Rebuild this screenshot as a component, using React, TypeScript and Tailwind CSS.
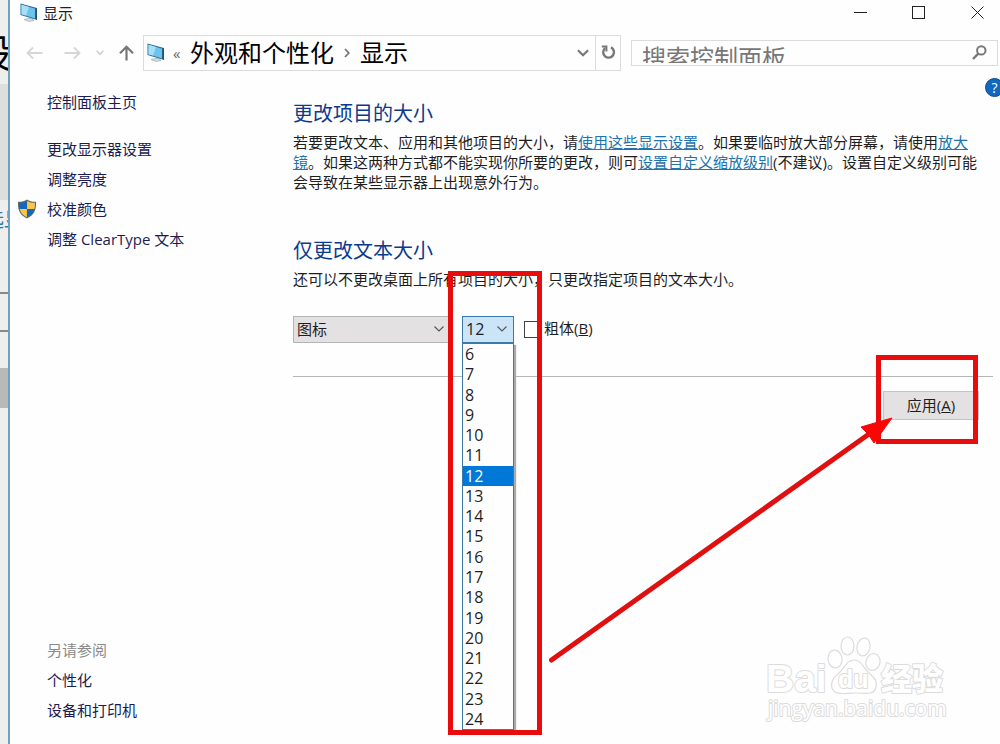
import React, { useState } from 'react';

const sizes = ['6', '7', '8', '9', '10', '11', '12', '13', '14', '15', '16', '17', '18', '19', '20', '21', '22', '23', '24'];

const tasks = [
  { label: '更改显示器设置' },
  { label: '调整亮度' },
  { label: '校准颜色', shield: true },
  { label: '调整 ClearType 文本' },
];

const MonitorIcon: React.FC = () => (
  <svg width="18" height="19" viewBox="0 0 18 19" className="shrink-0" aria-hidden="true">
    <path d="M4 16.5 L9 18.5 L14 17.5 L11 15 Z" fill="#d5dde2" stroke="#8fa3ae" strokeWidth="0.6" />
    <path d="M0.5 0.5 L17 5 V17 L0.5 12 Z" fill="#2f7196" />
    <path d="M1.5 1.8 L15.2 5.8 V15.4 L1.5 11.3 Z" fill="#6cc4ec" />
    <path d="M1.5 1.8 L9 4 L6 12.600 L1.5 11.3 Z" fill="#a5e0f8" />
    <path d="M15.2 5.8 L17 5 V17 L15.2 15.4 Z" fill="#26546e" />
  </svg>
);

const ShieldIcon: React.FC = () => (
  <svg width="20" height="20" viewBox="0 0 20 20" aria-hidden="true">
    <path d="M10 0.5 C7.5 2.3 4.5 2.9 1 2.8 C0.6 10.5 2.5 16 10 19.5 C17.5 16 19.4 10.5 19 2.8 C15.5 2.9 12.5 2.3 10 0.5 Z" fill="#5d6a6c" />
    <path d="M9.9 1.9 C7.8 3.2 5 3.9 2.1 3.8 C2 6 2.1 8.2 2.7 10 H9.9 Z" fill="#1467bd" />
    <path d="M10.1 1.9 C12.2 3.2 15 3.9 17.9 3.8 C18 6 17.9 8.2 17.3 10 H10.1 Z" fill="#fbc646" />
    <path d="M2.7 10 C3.7 13.8 6 16.5 9.9 18.3 V10 Z" fill="#fbc646" />
    <path d="M17.3 10 C16.3 13.8 14 16.5 10.1 18.3 V10 Z" fill="#1467bd" />
  </svg>
);

const Chevron: React.FC = () => (
  <svg width="10" height="6" viewBox="0 0 10 6" className="pointer-events-none absolute right-[7px] top-[10px]" aria-hidden="true">
    <path d="M0.5 0.5 L5 5 L9.5 0.5" fill="none" stroke="#555" strokeWidth="1.1" />
  </svg>
);

const BackgroundWindow: React.FC = () => (
  <div className="flex w-2 shrink-0 flex-col overflow-hidden bg-[#efeeee]" aria-hidden="true">
    <div className="flex h-[84px] items-center justify-end pt-5 text-[38px] leading-10 text-black">
      <span className="-mr-1">设</span>
    </div>
    <div className="h-[116px] bg-[#dfdede]" />
    <div className="flex h-10 items-center justify-center whitespace-nowrap text-xl text-[#2a7ab0]">选显</div>
    <div className="mt-[52px] h-[2px] bg-[#888]" />
    <div className="mt-9 h-[2px] bg-[#888]" />
    <div className="mt-9 h-10 bg-[#b9b9b9]" />
  </div>
);

const TitleBar: React.FC = () => (
  <header className="flex h-[25px] items-center pl-[10px] text-[15px]">
    <MonitorIcon />
    <h1 className="ml-[5px] flex-1 leading-5">显示</h1>
    <button aria-label="最小化" className="flex w-[58px] justify-center">
      <svg width="13" height="13" viewBox="0 0 13 13"><path d="M0 6.5 H13" stroke="#222" /></svg>
    </button>
    <button aria-label="最大化" className="flex w-[58px] justify-center">
      <svg width="13" height="13" viewBox="0 0 13 13"><rect x="0.5" y="0.5" width="12" height="12" fill="none" stroke="#222" /></svg>
    </button>
    <button aria-label="关闭" className="flex w-[53px] justify-center pl-2">
      <svg width="13" height="13" viewBox="0 0 13 13"><path d="M0.5 0.5 L12.5 12.5 M12.5 0.5 L0.5 12.5" stroke="#222" /></svg>
    </button>
  </header>
);

const NavBar: React.FC = () => (
  <div className="flex h-[55px] items-center pl-[5px] pr-[2px]">
    <button aria-label="后退" className="flex w-[38px] justify-center">
      <svg width="17" height="14" viewBox="0 0 17 14"><path d="M16.5 7 H1.5 M7 1.5 L1.5 7 L7 12.5" fill="none" stroke="#d6d6d6" strokeWidth="1.8" /></svg>
    </button>
    <button aria-label="前进" className="flex w-[38px] justify-center">
      <svg width="17" height="14" viewBox="0 0 17 14"><path d="M0.5 7 H15.5 M10 1.5 L15.5 7 L10 12.5" fill="none" stroke="#d6d6d6" strokeWidth="1.8" /></svg>
    </button>
    <button aria-label="最近浏览的位置" className="flex w-[18px] justify-center">
      <svg width="8" height="6" viewBox="0 0 8 6"><path d="M0.7 0.7 L4 4.3 L7.3 0.7" fill="none" stroke="#cfcfcf" strokeWidth="1.6" /></svg>
    </button>
    <button aria-label="上移" className="flex w-[34px] justify-center">
      <svg width="15" height="16" viewBox="0 0 15 16"><path d="M7.5 15.5 V2 M1 8.2 L7.5 1.7 L14 8.2" fill="none" stroke="#777" strokeWidth="2.2" /></svg>
    </button>
    <div className="flex h-9 min-w-0 flex-[477] items-center border border-[#dcdcdc] pl-[3px]">
      <MonitorIcon />
      <span className="ml-2 w-[17px] text-[15px] leading-5 text-[#666]">«</span>
      <a href="#appearance" className="whitespace-nowrap text-2xl text-black">外观和个性化</a>
      <svg width="6" height="10" viewBox="0 0 6 10" className="mx-[10px]" aria-hidden="true"><path d="M1 1 L4.8 5 L1 9" fill="none" stroke="#777" strokeWidth="1.8" /></svg>
      <a href="#display" className="flex-1 whitespace-nowrap text-2xl text-black">显示</a>
      <button aria-label="上一个位置" className="flex w-[25px] justify-center">
        <svg width="12" height="8" viewBox="0 0 12 8"><path d="M1 1.2 L6 6.2 L11 1.2" fill="none" stroke="#777" strokeWidth="2.2" /></svg>
      </button>
      <button aria-label="刷新" className="flex h-full w-[25px] items-center justify-center border-l border-[#dcdcdc]">
        <svg width="15" height="15" viewBox="0 0 15 15">
          <path d="M10 2.4 A5.4 5.4 0 1 1 4 3.2" fill="none" stroke="#777" strokeWidth="2.4" />
          <path d="M0.8 1.6 H5.4 V6.4" fill="none" stroke="#777" strokeWidth="2" />
        </svg>
      </button>
    </div>
    <div className="ml-[10px] flex h-[26px] min-w-0 flex-[368] border border-[#dcdcdc]">
      <div className="h-[22px] min-w-0 flex-1 overflow-hidden">
        <input type="text" aria-label="搜索控制面板" placeholder="搜索控制面板" className="h-[34px] w-full bg-transparent pl-[10px] text-2xl outline-none placeholder:text-[#777]" />
      </div>
      <button aria-label="搜索" className="flex w-9 items-center justify-center">
        <svg width="15" height="15" viewBox="0 0 15 15"><circle cx="9.3" cy="5.4" r="4.2" fill="none" stroke="#777" strokeWidth="2" /><path d="M6.3 8.6 L1 14" stroke="#777" strokeWidth="2.4" /></svg>
      </button>
    </div>
  </div>
);

const Sidebar: React.FC = () => (
  <nav className="flex w-[283px] shrink-0 flex-col pb-6 pt-3 text-[15px] leading-5 text-[#1c1c50]">
    <a href="#home" className="ml-[37px]">控制面板主页</a>
    <ul className="mt-[27px] flex flex-col gap-[10px]">
      {tasks.map((task) => (
        <li key={task.label} className="flex h-5 items-center">
          <span className="w-[37px] pl-[7px]">{task.shield && <ShieldIcon />}</span>
          <a href="#task">{task.label}</a>
        </li>
      ))}
    </ul>
    <div className="ml-[37px] mt-auto flex flex-col gap-[10px]">
      <p className="text-[#8a8a8a]">另请参阅</p>
      <a href="#personalize">个性化</a>
      <a href="#devices">设备和打印机</a>
    </div>
  </nav>
);

const Watermark: React.FC = () => (
  <svg width="184" height="90" viewBox="0 0 184 90" className="pointer-events-none absolute bottom-[18px] right-[52px]" aria-hidden="true">
    <g fill="#fff" stroke="#dcdcdc" strokeWidth="1.2">
      <ellipse cx="71" cy="23" rx="7" ry="9" transform="rotate(-8 71 23)" />
      <ellipse cx="83.500" cy="10" rx="6.500" ry="9" />
      <ellipse cx="99.500" cy="11" rx="6.500" ry="9" transform="rotate(12 99.500 11)" />
      <ellipse cx="109" cy="26" rx="7" ry="8.500" transform="rotate(14 109 26)" />
      <path d="M90 24 C97 24 99 31 104 36 C109 41 114 44 112 51 C110 60 101 57 91 57 C81 57 71 60 68 52 C66 44 71 41 76 36 C81 31 83 24 90 24 Z" />
    </g>
    <g fill="#fff" stroke="#dcdcdc" strokeWidth="2" strokeLinejoin="round" style={{ paintOrder: 'stroke' }}>
      <text x="2" y="56" fontSize="39" fontWeight="700" fontFamily="Liberation Sans, sans-serif">Bai</text>
      <text x="74" y="52" fontSize="25" fontWeight="700" fontFamily="Liberation Sans, sans-serif">du</text>
      <text x="117" y="54" fontSize="31" fontWeight="900" fontFamily="Noto Sans CJK SC, sans-serif">经验</text>
      <text x="4" y="80" fontSize="21" fontFamily="Open Sans, sans-serif">jingyan.baidu.com</text>
    </g>
  </svg>
);

const App: React.FC = () => {
  const [size, setSize] = useState('12');

  return (
    <div className="relative flex min-h-screen overflow-hidden bg-[#fefefe] font-['Open_Sans','Noto_Sans_CJK_SC',sans-serif] text-[#1e1e1e]">
      <BackgroundWindow />
      <div className="flex min-w-0 flex-1 flex-col border-l-2 border-[#6fa3b8]">
        <TitleBar />
        <NavBar />
        <div className="flex flex-1">
          <Sidebar />
          <main className="min-w-0 flex-1 pr-[7px] pt-[19px] text-[15px] leading-5">
            <h2 className="text-xl leading-[30px] text-[#0c3a8c]">更改项目的大小</h2>
            <p className="mt-[3px] whitespace-nowrap">
              若要更改文本、应用和其他项目的大小，请<a href="#settings" className="text-[#2173ae] underline">使用这些显示设置</a>。如果要临时放大部分屏幕，请使用<a href="#magnifier" className="text-[#2173ae] underline">放大<br />镜</a>。如果这两种方式都不能实现你所要的更改，则可<a href="#scaling" className="text-[#2173ae] underline">设置自定义缩放级别</a>(不建议)。设置自定义级别可能<br />
              会导致在某些显示器上出现意外行为。
            </p>
            <h2 className="mt-11 text-xl leading-[30px] text-[#0c3a8c]">仅更改文本大小</h2>
            <p className="mt-[3px]">还可以不更改桌面上所有项目的大小，只更改指定项目的文本大小。</p>

            <div className="mt-[27px] flex h-[27px] items-center">
              <div className="relative h-full w-[158px]">
                <select aria-label="项目" className="h-full w-full appearance-none border border-[#b4b4b4] bg-[#e3e1e2] pb-[2px] pl-[3px] outline-none">
                  <option>图标</option>
                </select>
                <Chevron />
              </div>
              <div className="relative ml-[11px] h-full w-[52px] text-base">
                <select aria-label="字号" value={size} onChange={(e) => setSize(e.target.value)} className="h-full w-full appearance-none border border-[#3a7ca8] bg-[#cce4f7] pb-[2px] pl-[3px] outline-none">
                  {sizes.map((s) => <option key={s}>{s}</option>)}
                </select>
                <Chevron />
                <ul role="listbox" aria-label="字号列表" className="absolute left-0 top-full grid h-[387px] w-full auto-rows-fr border border-[#3a7ca8] bg-[#fefefe] shadow-[2px_2px_1px_#aaa]">
                  {sizes.map((s) => (
                    <li key={s} role="option" aria-selected={s === size} onClick={() => setSize(s)} className={`flex items-center pl-[2px] leading-5 ${s === size ? 'bg-[#0078d7] text-white' : ''}`}>
                      {s}
                    </li>
                  ))}
                </ul>
              </div>
              <label className="ml-[10px] flex items-center gap-[3px]">
                <input type="checkbox" className="h-[17px] w-[17px] appearance-none border border-[#444] bg-white checked:bg-[#0078d7]" />
                <span className="pb-1">粗体(<u>B</u>)</span>
              </label>
            </div>

            <hr className="mt-[33px] border-[#b5b5b5]" />
            <div className="mr-[14px] mt-[14px] flex justify-end">
              <button className="h-[29px] w-24 border border-[#c4c4c4] bg-[#e3e1e2] pb-[2px]">应用(<u>A</u>)</button>
            </div>
          </main>
        </div>
      </div>

      <button aria-label="帮助" className="absolute right-[-4px] top-[78px] h-[19px] w-[19px] rounded-full border border-[#0b4a86] bg-[#1068bf] text-sm leading-4 text-white">?</button>

      <Watermark />

      {/* callouts */}
      <div className="pointer-events-none absolute left-[448px] top-[271px] h-[464px] w-[94px] border-[5px] border-[#e80c0c]" />
      <div className="pointer-events-none absolute left-[876px] top-[355px] h-[89px] w-[102px] border-[5px] border-[#e80c0c]" />
      <svg width="350" height="254" viewBox="0 0 350 254" className="pointer-events-none absolute left-[545px] top-[414px]" aria-hidden="true">
        <path d="M6.500 246 L324 20" stroke="#e01010" strokeWidth="5" strokeLinecap="round" />
        <path d="M347 4 L316 13 L323 20 L329 29 Z" fill="#fb0606" stroke="#fb0606" />
      </svg>
    </div>
  );
};

export default App;
